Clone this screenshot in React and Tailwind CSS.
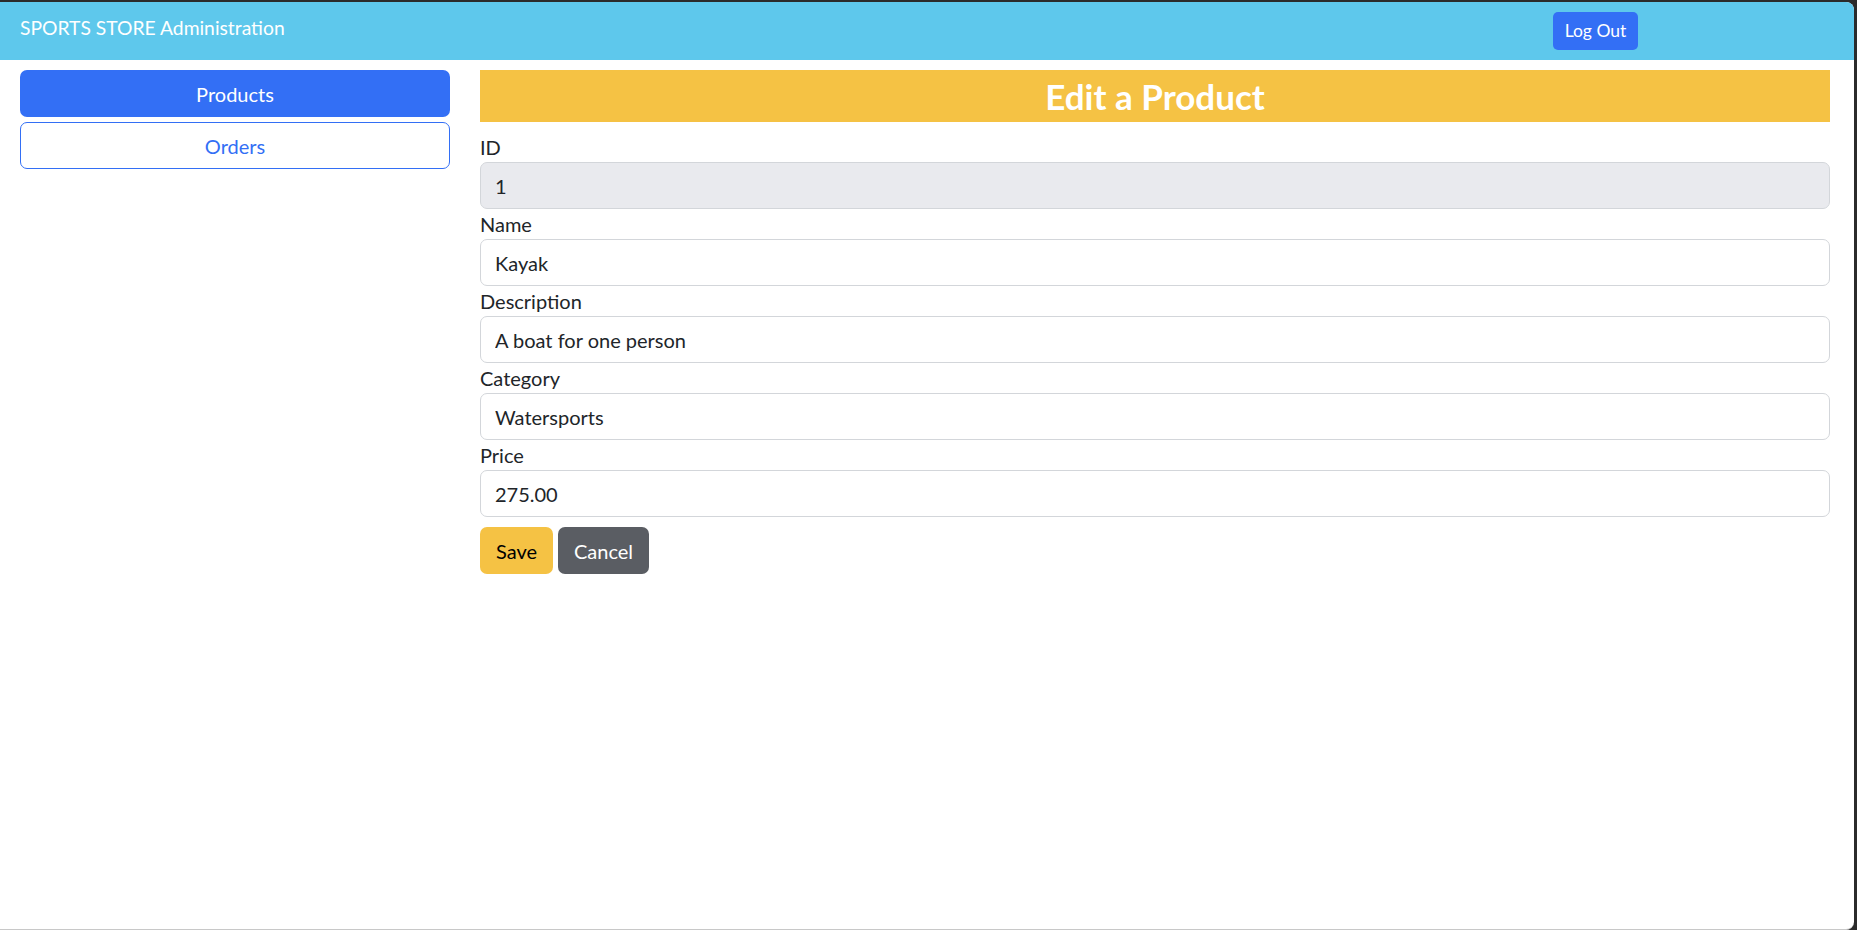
import React from 'react';

const fields = [
  { label: 'ID', value: '1', disabled: true },
  { label: 'Name', value: 'Kayak' },
  { label: 'Description', value: 'A boat for one person' },
  { label: 'Category', value: 'Watersports' },
  { label: 'Price', value: '275.00' },
];

function Field({ label, value, disabled }) {
  return (
    <div className="flex flex-col">
      <label className="h-[30px] leading-[30px] text-[20px] text-[#212529]">{label}</label>
      <input
        readOnly
        value={value}
        className={`h-[47px] w-full rounded-[7px] border border-[#d3d6da] px-[14px] text-[20px] text-[#212529] outline-none ${
          disabled ? 'bg-[#e9eaee]' : 'bg-white'
        }`}
      />
    </div>
  );
}

export default function App() {
  return (
    <div className="h-[930px] w-full bg-[#2b2b2b] pt-[2px] pr-[3px] font-['Lato',sans-serif]">
      <div className="flex h-full flex-col overflow-hidden rounded-tr-[8px] rounded-br-[8px] border-b border-[#c8c8c8] bg-white">
        <header className="flex h-[58px] shrink-0 items-start bg-[#5ec8ec]">
          <div className="pl-[20px] pt-[11px] text-[19.3px] leading-[30px] text-white">SPORTS STORE Administration</div>
          <div className="flex-1" />
          <button className="mt-[10px] mr-[216px] h-[38px] w-[85px] rounded-[5px] bg-[#336ff5] text-[17.5px] text-white">
            Log Out
          </button>
        </header>

        <main className="flex flex-1 pt-[10px]">
          <nav className="flex w-[450px] shrink-0 flex-col gap-[5px] pl-[20px]">
            <button className="h-[47px] w-full rounded-[7px] bg-[#336ff5] text-[20px] text-white">Products</button>
            <button className="h-[47px] w-full rounded-[7px] border border-[#336ff5] bg-white text-[20px] text-[#336ff5]">
              Orders
            </button>
          </nav>

          <section className="ml-[30px] flex-1 pr-[24px]">
            <h3 className="flex h-[52px] items-center justify-center bg-[#f5c244] text-[35px] font-bold text-white">
              Edit a Product
            </h3>
            <form className="mt-[10px] flex flex-col">
              {fields.map((f) => (
                <Field key={f.label} {...f} />
              ))}
              <div className="mt-[10px] flex gap-[5px]">
                <button type="button" className="h-[47px] w-[73px] rounded-[7px] bg-[#f5c244] text-[20px] text-black">
                  Save
                </button>
                <button type="button" className="h-[47px] w-[91px] rounded-[7px] bg-[#5a5d63] text-[20px] text-white">
                  Cancel
                </button>
              </div>
            </form>
          </section>
        </main>
      </div>
    </div>
  );
}
